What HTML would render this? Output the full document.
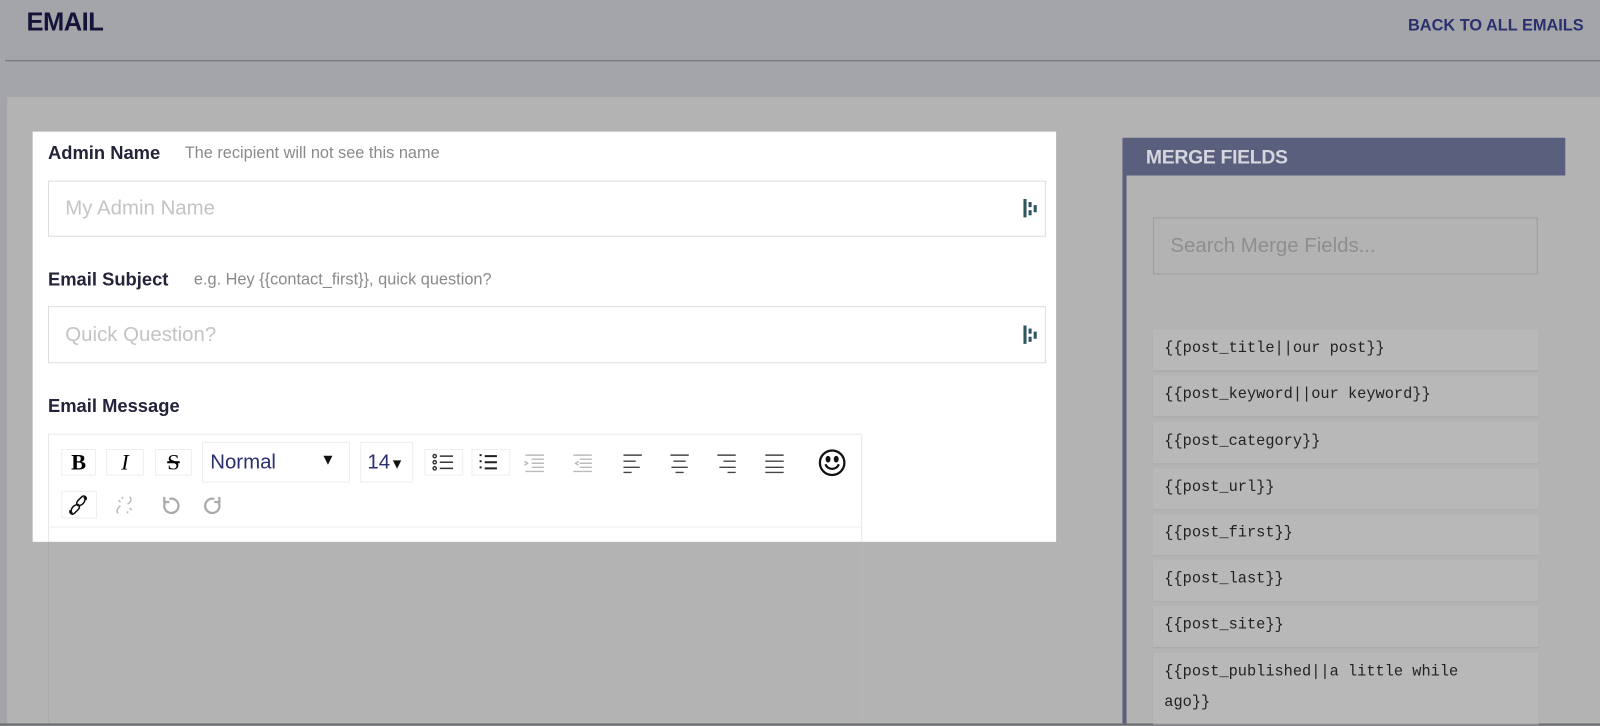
<!DOCTYPE html>
<html><head><meta charset="utf-8"><style>
*{margin:0;padding:0;box-sizing:border-box}
body{width:1600px;height:725px;overflow:hidden;background:#a4a5a9;font-family:"Liberation Sans",Arial,sans-serif;position:relative}
#w{position:absolute;left:0;top:0;width:1568px;height:711px;transform:scale(1.0204);transform-origin:0 0}
.a{position:absolute}
.btn{position:absolute;top:440px;width:38px;height:26px;border:1px solid #eee;background:#fff;display:flex;align-items:center;justify-content:center}
.item{position:absolute;left:1130px;width:378px;height:40px;background:#b8b8b8;box-shadow:0 1px 1px #a8a8a8;font-family:"Liberation Mono",monospace;font-size:15px;color:#222;padding-left:11px;line-height:38px}
</style></head><body><div id="w">
<div class="a" style="left:26px;top:8px;font-size:25px;font-weight:bold;color:#14143a;letter-spacing:-0.5px">EMAIL</div>
<div class="a" style="right:16px;top:17px;font-size:16px;font-weight:bold;color:#2a2f6e">BACK TO ALL EMAILS</div>
<div class="a" style="left:5px;top:59px;width:1595px;height:1px;background:#6a6b70"></div>
<div class="a" style="left:7px;top:95px;width:1593px;height:614px;background:#b3b3b3"></div>
<div class="a" style="left:0;top:709px;width:1600px;height:2px;background:#6a6b70"></div>

<div class="a" style="left:32px;top:129px;width:1003px;height:402px;background:#fff"></div>
<div class="a" style="left:47px;top:140px;font-size:18px;font-weight:bold;color:#23233a">Admin Name</div>
<div class="a" style="left:181px;top:142px;font-size:16px;color:#8a8a8a">The recipient will not see this name</div>
<div class="a" style="left:47px;top:177px;width:978px;height:55px;border:1px solid #ddd"></div>
<div class="a" style="left:64px;top:193px;font-size:20px;color:#c4c4c4">My Admin Name</div>
<div class="a" style="left:47px;top:264px;font-size:18px;font-weight:bold;color:#23233a">Email Subject</div>
<div class="a" style="left:190px;top:266px;font-size:16px;color:#8a8a8a">e.g. Hey {{contact_first}}, quick question?</div>
<div class="a" style="left:47px;top:300px;width:978px;height:56px;border:1px solid #ddd"></div>
<div class="a" style="left:64px;top:317px;font-size:20px;color:#c4c4c4">Quick Question?</div>
<svg class="a" style="left:1002px;top:195px" width="16" height="20"><rect x="1" y="0" width="3" height="18" fill="#2d5560"/><rect x="6" y="3" width="3" height="5" fill="#2d5560"/><rect x="6" y="11" width="3" height="5" fill="#2d5560"/><rect x="11" y="6" width="3" height="7" fill="#2d5560"/></svg>
<svg class="a" style="left:1002px;top:319px" width="16" height="20"><rect x="1" y="0" width="3" height="18" fill="#2d5560"/><rect x="6" y="3" width="3" height="5" fill="#2d5560"/><rect x="6" y="11" width="3" height="5" fill="#2d5560"/><rect x="11" y="6" width="3" height="7" fill="#2d5560"/></svg>
<div class="a" style="left:47px;top:388px;font-size:18px;font-weight:bold;color:#23233a">Email Message</div>

<div class="a" style="left:47px;top:425px;width:798px;height:284px;border:1px solid #e8e8e8;border-bottom:none"></div>
<div class="a" style="left:47px;top:516px;width:798px;height:1px;background:#eee"></div>
<div class="a" style="left:47px;top:531px;width:798px;height:178px;border-left:1px solid #aaa;border-right:1px solid #aaa"></div>

<div class="btn" style="left:60px;width:34px;font-family:'Liberation Serif',serif;font-weight:bold;font-size:22px">B</div>
<div class="btn" style="left:104px;width:37px;font-family:'Liberation Serif',serif;font-style:italic;font-size:22px">I</div>
<div class="btn" style="left:152px;width:36px;font-family:'Liberation Serif',serif;font-size:22px;text-decoration:line-through">S</div>
<div class="a" style="left:198px;top:433px;width:145px;height:40px;border:1px solid #eee;font-size:20px;color:#2a2f6e;padding:8px 0 0 7px">Normal<span style="position:absolute;left:115px;top:8px;font-size:15px;color:#111">▼</span></div>
<div class="a" style="left:353px;top:433px;width:52px;height:40px;border:1px solid #eee;font-size:20px;color:#2a2f6e;padding:8px 0 0 6px">14<span style="font-size:14px;color:#111">▼</span></div>
<div class="btn" style="left:416px"></div>
<div class="btn" style="left:462px"></div>
<svg class="a" style="left:416px;top:440px" width="400" height="28" stroke-width="1.4" fill="none">
<g stroke="#333"><circle cx="10" cy="7" r="1.6"/><circle cx="10" cy="13" r="1.6"/><circle cx="10" cy="19" r="1.6"/><path d="M15 7h13M15 13h13M15 19h13"/></g>
<g stroke="#222"><path d="M54 6h2M54 12h2M54 18h2M59 7h12M59 13h12M59 19h12" stroke-width="2"/></g>
<g stroke="#bbb"><path d="M99 6h18M105 10h12M105 14h12M105 18h12M99 22h18M98 12l3 2-3 2"/></g>
<g stroke="#bbb"><path d="M146 6h18M152 10h12M152 14h12M152 18h12M146 22h18M151 12l-3 2 3 2"/></g>
<g stroke="#444"><path d="M195 6h18M195 12h12M195 18h16M195 23h8"/></g>
<g stroke="#444"><path d="M241 6h18M244 12h12M242 18h16M246 23h8"/></g>
<g stroke="#444"><path d="M287 6h18M293 12h12M289 18h16M297 23h8"/></g>
<g stroke="#444"><path d="M334 6h18M334 12h18M334 18h18M334 23h18"/></g>
</svg>
<svg class="a" style="left:801px;top:439px" width="30" height="30" fill="none" stroke="#111" stroke-width="2.2"><circle cx="14.5" cy="14.5" r="12"/><path d="M8 16c2 6 11 6 13 0"/><ellipse cx="10.5" cy="11" rx="1.3" ry="2.2" fill="#111"/><ellipse cx="18.5" cy="11" rx="1.3" ry="2.2" fill="#111"/></svg>
<div class="a" style="left:60px;top:481px;width:35px;height:27px;border:1px solid #eee"></div>
<svg class="a" style="left:60px;top:481px" width="180" height="28" fill="none" stroke-width="1.5">
<g stroke="#111"><path d="M11 22c-3-2 0-7 3-8M14 14c3-2 5 1 3 4l-4 4c-2 2-6 0-4-3"/><path d="M22 6c3 2 0 7-3 8M19 14c-3 2-5-1-3-4l4-4c2-2 6 0 4 3"/></g>
<g stroke="#bbb"><path d="M56 22c-3-2 0-6 2-7M67 6c3 2 0 6-2 7M56 9l2 2M69 19l-2-2M60 6v2M65 22v-2"/></g>
<g stroke="#aaa" stroke-width="2.2"><path d="M106 8a7 7 0 1 1-4 3M101 6v5h5"/><path d="M150 8a7 7 0 1 0 4 3M155 6v5h-5"/></g>
</svg>

<div class="a" style="left:1100px;top:135px;width:434px;height:37px;background:#5b5f7e"></div>
<div class="a" style="left:1123px;top:144px;font-size:19px;font-weight:bold;color:#d6d7de;letter-spacing:-0.3px">MERGE FIELDS</div>
<div class="a" style="left:1100px;top:172px;width:4px;height:537px;background:#5b5f7e"></div>
<div class="a" style="left:1130px;top:213px;width:377px;height:56px;border:1px solid #9c9c9c"></div>
<div class="a" style="left:1147px;top:230px;font-size:20px;color:#8e8e8e">Search Merge Fields...</div>
<div class="item" style="top:323px">{{post_title||our post}}</div>
<div class="item" style="top:368px">{{post_keyword||our keyword}}</div>
<div class="item" style="top:414px">{{post_category}}</div>
<div class="item" style="top:459px">{{post_url}}</div>
<div class="item" style="top:504px">{{post_first}}</div>
<div class="item" style="top:549px">{{post_last}}</div>
<div class="item" style="top:594px">{{post_site}}</div>
<div class="item" style="top:640px;height:69px;line-height:30px;padding-top:4px">{{post_published||a little while<br>ago}}</div>
</div></body></html>
